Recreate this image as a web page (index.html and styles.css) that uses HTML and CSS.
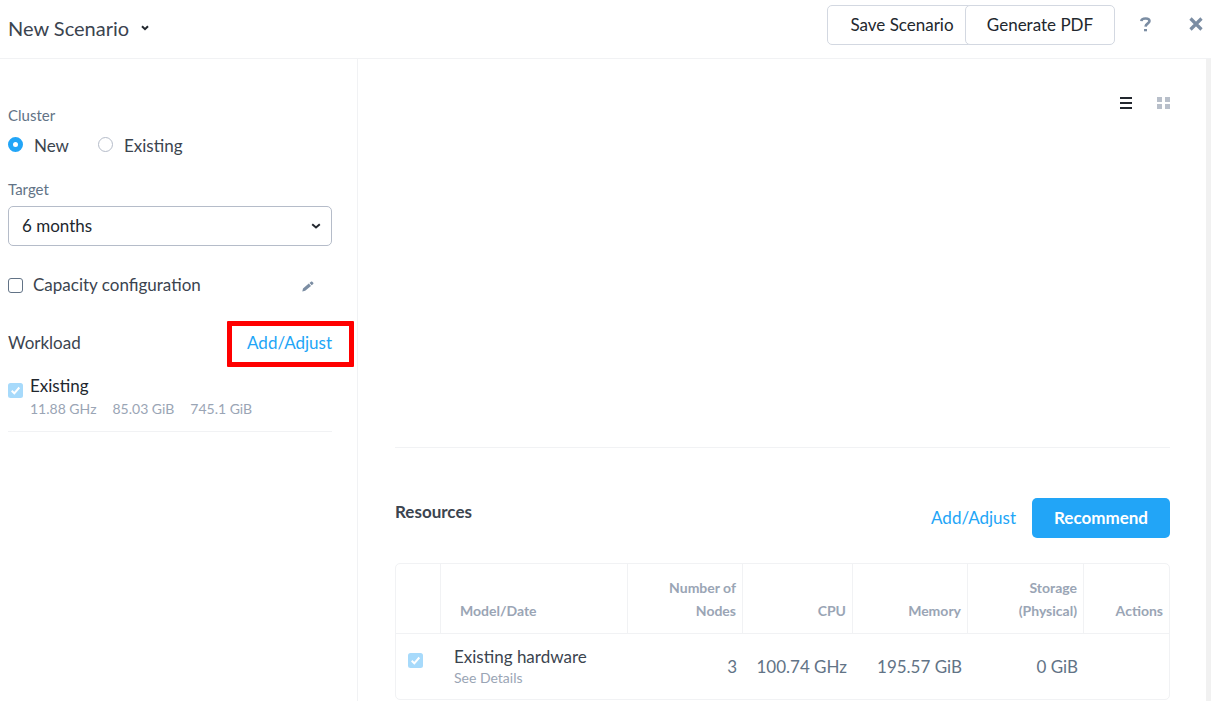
FILE: index.html
```html
<!DOCTYPE html>
<html lang="en">
<head>
<meta charset="utf-8">
<title>New Scenario</title>
<link rel="stylesheet" href="styles.css">
</head>
<body>
<div class="app">
  <header class="topbar">
    <div class="title"><span class="title-text">New Scenario</span>
      <svg class="chevron" width="8" height="6" viewBox="0 0 8 6"><path d="M1 1.2 4 4.2 7 1.2" fill="none" stroke="#22272e" stroke-width="2"/></svg>
    </div>
    <div class="actions">
      <button class="btn save"><span>Save Scenario</span></button>
      <button class="btn pdf"><span>Generate PDF</span></button>
      <svg class="help" width="12" height="15" viewBox="0 0 12 15"><path d="M1.3 4.1C1.5 2.3 3.2 1.5 5.6 1.5c2.4 0 3.9.8 3.9 2.6C9.500 6.500 5.800 6.200 5.500 9.700" fill="none" stroke="#7b8da3" stroke-width="2.600"/><path d="M4 12h3v2.300H4z" fill="#7b8da3"/></svg>
      <svg class="close" width="14" height="14" viewBox="0 0 14 14"><path d="M1.500 1.500 12.500 12.500M12.500 1.500 1.500 12.500" stroke="#7b8da3" stroke-width="3.200"/></svg>
    </div>
  </header>
  <div class="body">
    <aside class="sidebar">
      <div class="label cluster">Cluster</div>
      <div class="radios">
        <span class="radio on"></span><span class="radio-text new">New</span>
        <span class="radio"></span><span class="radio-text existing">Existing</span>
      </div>
      <div class="label target">Target</div>
      <div class="select"><span class="months">6 months</span>
        <svg width="10" height="6" viewBox="0 0 10 6"><path d="M1.200 1.200 5 4.400 8.800 1.200" fill="none" stroke="#22272e" stroke-width="2"/></svg>
      </div>
      <div class="capacity">
        <span class="box"></span><span class="capacity-text">Capacity configuration</span>
        <svg width="12" height="11" viewBox="0 0 12 11"><path d="M.3 10.500 1 7.500 6.800 2.600 9 5 3.200 9.800ZM7.500 2 9.200.6q.6-.4 1.100.1l1 1.100q.4.600-.1 1.100L9.700 4.300Z" fill="#7b8da3"/></svg>
      </div>
      <div class="workload"><span class="workload-text">Workload</span><a class="link">Add/Adjust</a><span class="highlight"></span></div>
      <div class="item">
        <svg class="check" width="15" height="15" viewBox="0 0 15 15"><rect width="15" height="15" rx="2.500" fill="#a7dafb"/><path d="M3.700 7.800 6.300 10.300 11.300 4.500" fill="none" stroke="#fff" stroke-width="2"/></svg>
        <div class="item-main">
          <div class="item-name">Existing</div>
          <div class="stats"><span class="ghz">11.88 GHz</span><span class="mem">85.03 GiB</span><span class="disk">745.1 GiB</span></div>
        </div>
      </div>
    </aside>
    <main class="main">
      <div class="chart">
        <div class="views">
          <svg width="12" height="12" viewBox="0 0 12 12"><path d="M0 0h12v2H0zM0 5h12v2H0zM0 10h12v2H0z" fill="#22272e"/></svg>
          <svg width="13" height="12" viewBox="0 0 13 12"><path d="M0 0h5v5H0zM8 0h5v5H8zM0 7h5v5H0zM8 7h5v5H8z" fill="#b8bfca"/></svg>
        </div>
      </div>
      <div class="resources">
        <h2><span>Resources</span></h2>
        <div class="res-actions"><a class="link">Add/Adjust</a><button class="recommend"><span>Recommend</span></button></div>
      </div>
      <div class="table">
        <div class="row head">
          <div></div>
          <div class="model"><span class="h-model">Model/Date</span></div>
          <div><span class="h-number">Number of</span><span class="h-nodes">Nodes</span></div>
          <div><span class="h-cpu">CPU</span></div>
          <div><span class="h-memory">Memory</span></div>
          <div><span class="h-storage">Storage</span><span class="h-physical">(Physical)</span></div>
          <div><span class="h-actions">Actions</span></div>
        </div>
        <div class="row data">
          <div class="pick"><svg width="15" height="15" viewBox="0 0 15 15"><rect width="15" height="15" rx="2.500" fill="#a7dafb"/><path d="M3.700 7.800 6.300 10.300 11.300 4.500" fill="none" stroke="#fff" stroke-width="2"/></svg></div>
          <div class="hardware"><span class="hw-name">Existing hardware</span><span class="hw-details">See Details</span></div>
          <div class="value"><span>3</span></div>
          <div class="value"><span class="v-cpu">100.74 GHz</span></div>
          <div class="value"><span class="v-mem">195.57 GiB</span></div>
          <div class="value"><span class="v-disk">0 GiB</span></div>
          <div></div>
        </div>
      </div>
    </main>
    <div class="scrollbar"></div>
  </div>
</div>
</body>
</html>
```
FILE: styles.css
```css
* { box-sizing: border-box; }
body { margin: 0; background: #fff; font: 17px/24px Lato, "Open Sans", sans-serif; color: #3b444f; overflow: hidden; }
svg { display: block; flex: none; }
span, a { white-space: nowrap; }
button { font: inherit; cursor: pointer; padding: 0; }
.app { height: 701px; display: flex; flex-direction: column; }

.topbar { height: 59px; flex: none; border-bottom: 1px solid #f1f2f4; display: flex; justify-content: space-between; align-items: flex-start; padding-left: 8px; }
.title { display: flex; align-items: center; gap: 12px; padding-top: 16px; font-size: 20px; }
.actions { display: flex; padding-top: 5px; }
.btn { height: 40px; border: 1px solid #d3d8e1; border-radius: 5px; background: #fff; color: #22272e; }
.save { width: 150px; margin-right: -12px; }
.pdf { width: 150px; position: relative; }
.help { margin: 12px 0 0 25px; }
.close { margin: 12px 8px 0 37px; }

.body { flex: 1; min-height: 0; display: flex; }
.sidebar { width: 358px; flex: none; border-right: 1px solid #f1f2f4; padding: 46px 25px 0 8px; }
.label { font-size: 15px; line-height: 20px; color: #627386; }
.radios { display: flex; align-items: center; height: 24px; margin-top: 8px; }
.radio { width: 15px; height: 15px; border: 1px solid #b5bcc9; border-radius: 50%; margin-top: -2px; }
.radio.on { border: 5px solid #22a5f7; }
.new { margin: 2px 29px 0 11px; }
.existing { margin: 2px 0 0 11px; }
.target { margin-top: 22px; }
.select { margin-top: 7px; height: 40px; border: 1px solid #b5bcc9; border-radius: 5px; display: flex; align-items: center; justify-content: space-between; padding: 0 10px 0 13px; color: #22272e; }
.capacity { margin-top: 27px; display: flex; align-items: center; height: 24px; }
.box { width: 15px; height: 15px; border: 1px solid #627386; border-radius: 3px; margin-right: 10px; }
.capacity svg { margin: 2px 18px 0 auto; }
.workload { position: relative; display: flex; justify-content: space-between; height: 24px; margin-top: 34px; }
.link { color: #22a5f7; }
.highlight { position: absolute; left: 219px; top: -10px; width: 127px; height: 46px; border: 5px solid #f00; border-radius: 1px; }
.item { display: flex; gap: 7px; margin-top: 19px; height: 58px; border-bottom: 1px solid #f1f2f4; }
.check { margin-top: 9px; }
.item-name { color: #22272e; }
.stats { display: flex; gap: 16px; font-size: 14px; line-height: 22px; color: #9aa5b5; }

.main { flex: 1; min-width: 0; padding: 0 36px 0 37px; }
.chart { height: 389px; border-bottom: 1px solid #f1f2f4; padding-top: 38px; }
.views { display: flex; justify-content: flex-end; gap: 25px; }
.resources { display: flex; justify-content: space-between; margin-top: 50px; height: 65px; }
h2 { margin: 2px 0 0; font-size: 17px; line-height: 24px; font-weight: 700; }
.res-actions { display: flex; gap: 16px; line-height: 40px; }
.recommend { width: 138px; height: 40px; border: 0; border-radius: 5px; background: #22a5f7; color: #fff; font-weight: 700; }
.table { width: 775px; height: 137px; border: 1px solid #f1f2f4; border-radius: 5px; }
.row { display: grid; grid-template-columns: 45px 187px 115px 110px 115px 116px 85px; }
.head { height: 70px; border-bottom: 1px solid #f1f2f4; font-size: 14px; line-height: 23px; font-weight: 700; color: #9aa5b5; }
.head > div { border-right: 1px solid #f1f2f4; display: flex; flex-direction: column; align-items: flex-end; justify-content: flex-end; padding: 0 6px 11px 0; }
.head > div:last-child { border: 0; }
.head .model { align-items: flex-start; padding-left: 19px; }
.data { height: 65px; }
.pick { padding: 19px 0 0 12px; }
.hardware { padding: 11px 0 0 13px; display: flex; flex-direction: column; }
.hw-details { font-size: 14px; line-height: 18px; color: #9aa5b5; }
.value { text-align: right; padding: 21px 6px 0 0; color: #627386; }
.scrollbar { width: 5px; flex: none; background: #f1f1f1; }
```
